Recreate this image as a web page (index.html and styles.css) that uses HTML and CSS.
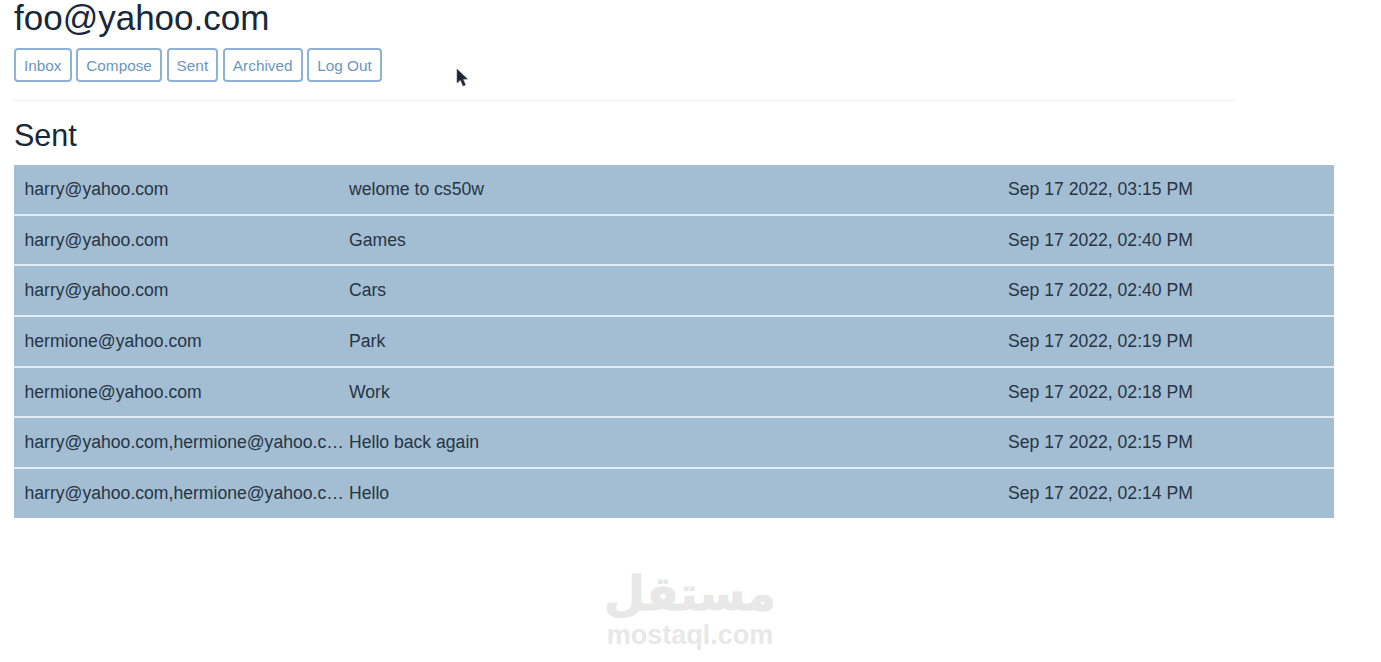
FILE: index.html
```html
<!DOCTYPE html>
<html>
<head>
  <title>Mail</title>
  <link rel="stylesheet" href="styles.css">
</head>
<body>
  <div class="page">
    <h2 class="user">foo@yahoo.com</h2>

    <div class="nav">
      <button class="btn">Inbox</button>
      <button class="btn">Compose</button>
      <button class="btn">Sent</button>
      <button class="btn">Archived</button>
      <button class="btn">Log Out</button>
    </div>

    <hr class="rule">

    <h3 class="title">Sent</h3>

    <div class="list">
      <div class="row">
        <div class="to">harry@yahoo.com</div>
        <div class="subject">welome to cs50w</div>
        <div class="date">Sep 17 2022, 03:15 PM</div>
      </div>
      <div class="row">
        <div class="to">harry@yahoo.com</div>
        <div class="subject">Games</div>
        <div class="date">Sep 17 2022, 02:40 PM</div>
      </div>
      <div class="row">
        <div class="to">harry@yahoo.com</div>
        <div class="subject">Cars</div>
        <div class="date">Sep 17 2022, 02:40 PM</div>
      </div>
      <div class="row">
        <div class="to">hermione@yahoo.com</div>
        <div class="subject">Park</div>
        <div class="date">Sep 17 2022, 02:19 PM</div>
      </div>
      <div class="row">
        <div class="to">hermione@yahoo.com</div>
        <div class="subject">Work</div>
        <div class="date">Sep 17 2022, 02:18 PM</div>
      </div>
      <div class="row">
        <div class="to">harry@yahoo.com,hermione@yahoo.com</div>
        <div class="subject">Hello back again</div>
        <div class="date">Sep 17 2022, 02:15 PM</div>
      </div>
      <div class="row">
        <div class="to">harry@yahoo.com,hermione@yahoo.com</div>
        <div class="subject">Hello</div>
        <div class="date">Sep 17 2022, 02:14 PM</div>
      </div>
    </div>
  </div>

  <svg class="cursor" width="13" height="20" viewBox="0 0 13 20">
    <path d="M1 1 L1 15 L4.5 12 L7 18 L9.5 17 L7.2 11.2 L11.5 11 Z" fill="#1c2630" stroke="#5b6570" stroke-width="0.6"/>
  </svg>

  <div class="watermark">
    <div class="mark-ar" lang="ar" dir="rtl">مستقل</div>
    <div class="mark-en">mostaql.com</div>
  </div>
</body>
</html>
```

FILE: styles.css
```css
body {
  margin: 0;
  font-family: "Liberation Sans", Arial, sans-serif;
  color: #263545;
  background-color: #fff;
}

.page {
  width: 1320px;
  padding-left: 14px;
}

.user {
  margin: 0;
  font-size: 35px;
  font-weight: 400;
  line-height: 36px;
  color: #17283a;
}

.nav {
  display: flex;
  gap: 4.7px;
  margin-top: 12px;
}

.btn {
  height: 34px;
  padding: 1px 8px 0;
  font-family: "Liberation Sans", Arial, sans-serif;
  font-size: 15.35px;
  color: #6a97c0;
  background-color: #fff;
  border: 2px solid #8db2d6;
  border-radius: 4px;
}

.rule {
  width: 1220px;
  margin: 18px 0 0;
  border: none;
  border-top: 1px solid #eceef0;
}

.title {
  margin: 16px 0 0;
  font-size: 30.5px;
  font-weight: 400;
  line-height: 36px;
  color: #17283a;
}

.list {
  display: flex;
  flex-direction: column;
  gap: 2px;
  margin-top: 12px;
  background-color: #e2ecf4;
}

.row {
  display: flex;
  align-items: center;
  height: 48.7px;
  padding-left: 10.5px;
  font-size: 17.6px;
  background-color: #a3bdd2;
}

.to {
  width: 320px;
  margin-right: 4.5px;
  overflow: hidden;
  white-space: nowrap;
  text-overflow: ellipsis;
}

.subject {
  width: 659px;
}

.cursor {
  position: absolute;
  left: 456px;
  top: 68px;
}

.watermark {
  position: absolute;
  left: 560px;
  top: 566px;
  width: 260px;
  text-align: center;
  color: #e8e8e8;
  font-weight: 700;
}

.mark-ar {
  font-family: "DejaVu Sans", sans-serif;
  font-size: 47px;
  line-height: 56px;
  -webkit-text-stroke: 1px #e8e8e8;
}

.mark-en {
  font-size: 27px;
  line-height: 26px;
}
```
